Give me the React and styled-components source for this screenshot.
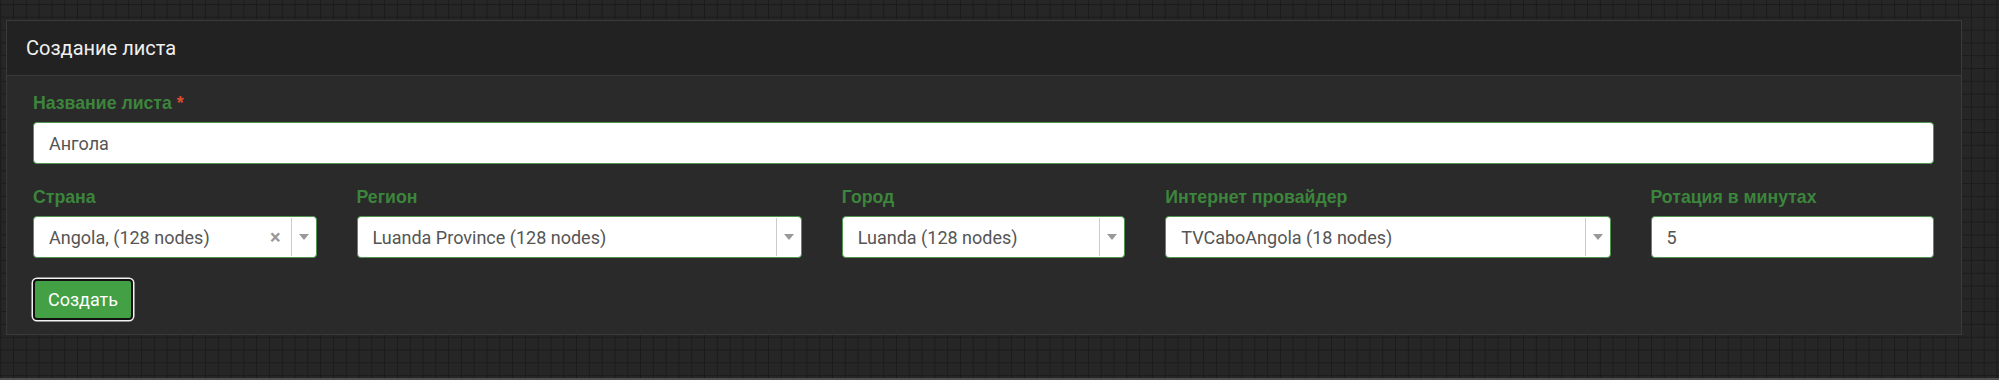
import styled, { createGlobalStyle } from 'styled-components';

const Global = createGlobalStyle`
  html, body {
    margin: 0;
    padding: 0;
    background: #262626;
  }
  body {
    font-family: Roboto, "Liberation Sans", sans-serif;
  }
`;

const Page = styled.div`
  box-sizing: border-box;
  min-height: 380px;
  padding: 20px 37px 0 6px;
  background-color: #262626;
  background-image:
    linear-gradient(to right, #1b1b1b 1px, transparent 1px),
    linear-gradient(to bottom, #1b1b1b 1px, transparent 1px);
  background-size: 12.8px 12.8px;
  background-position: 0.2px 4px;
  border-bottom: 2px solid #505050;
`;

const Panel = styled.section`
  background: #2a2a2a;
  border: 1px solid #3a3a3a;
`;

const PanelHeader = styled.header`
  height: 54px;
  display: flex;
  align-items: center;
  padding: 0 19px;
  background: #222;
  border-bottom: 1px solid #3a3a3a;
  color: #f0f0f0;
  font-size: 20px;
`;

const PanelBody = styled.div`
  padding: 16px 27px 14px 26px;
`;

const Field = styled.div`
  display: flex;
  flex-direction: column;
  min-width: 0;
`;

const Col = styled(Field)`
  padding: 0 20px;
`;

const Label = styled.label`
  font-family: "Liberation Sans", Arial, sans-serif;
  font-weight: bold;
  font-size: 17.7px;
  line-height: 22px;
  color: #3c853c;
  margin-bottom: 8px;
`;

const Required = styled.span`
  color: #e04b2d;
  margin-left: 5px;
`;

const Input = styled.div`
  box-sizing: border-box;
  height: 42px;
  display: flex;
  align-items: center;
  padding: 0 15px;
  background: #fff;
  border: 1px solid #4f954f;
  border-radius: 4px;
  color: #555;
  font-size: 18px;
`;

const Row = styled.div`
  display: grid;
  grid-template-columns: minmax(0, 2fr) minmax(0, 3fr) minmax(0, 2fr) minmax(0, 3fr) minmax(0, 2fr);
  margin: 22px -20px 0;
`;

const SelectBox = styled.div`
  box-sizing: border-box;
  height: 42px;
  display: flex;
  align-items: stretch;
  background: #fff;
  border: 1px solid #4f954f;
  border-radius: 4px;
  color: #555;
  font-size: 18px;
`;

const SelectValue = styled.div`
  flex: 1;
  display: flex;
  align-items: center;
  padding-left: 15px;
  white-space: nowrap;
  overflow: hidden;
`;

const Clear = styled.span`
  display: flex;
  align-items: center;
  padding-right: 10px;
  color: #999;
  font-size: 20px;
  font-weight: bold;
`;

const ArrowZone = styled.div`
  width: 24px;
  display: flex;
  align-items: center;
  justify-content: center;
  border-left: 1px solid #ccc;
  margin: 1px 0;
`;

const Arrow = styled.span`
  width: 0;
  height: 0;
  border-left: 5px solid transparent;
  border-right: 5px solid transparent;
  border-top: 6px solid #999;
`;

const Actions = styled.div`
  margin-top: 21px;
`;

const Button = styled.button`
  box-sizing: border-box;
  width: 100px;
  height: 41px;
  padding: 0;
  background: #44a044;
  color: #fff;
  font-family: Roboto, "Liberation Sans", sans-serif;
  font-size: 18px;
  border: 2px solid #111;
  border-radius: 4px;
  box-shadow: 0 0 0 1.5px #f2f2f2;
  cursor: pointer;
`;

const Select = ({ value, clearable }) => (
  <SelectBox>
    <SelectValue>{value}</SelectValue>
    {clearable && <Clear>×</Clear>}
    <ArrowZone>
      <Arrow />
    </ArrowZone>
  </SelectBox>
);

const fields = [
  { label: 'Страна', value: 'Angola, (128 nodes)', clearable: true },
  { label: 'Регион', value: 'Luanda Province (128 nodes)' },
  { label: 'Город', value: 'Luanda (128 nodes)' },
  { label: 'Интернет провайдер', value: 'TVCaboAngola (18 nodes)' },
];

export default function App() {
  return (
    <>
      <Global />
      <Page>
        <Panel>
          <PanelHeader>Создание листа</PanelHeader>
          <PanelBody>
            <Field>
              <Label>
                Название листа<Required>*</Required>
              </Label>
              <Input>Ангола</Input>
            </Field>
            <Row>
              {fields.map((f) => (
                <Col key={f.label}>
                  <Label>{f.label}</Label>
                  <Select value={f.value} clearable={f.clearable} />
                </Col>
              ))}
              <Col>
                <Label>Ротация в минутах</Label>
                <Input>5</Input>
              </Col>
            </Row>
            <Actions>
              <Button>Создать</Button>
            </Actions>
          </PanelBody>
        </Panel>
      </Page>
    </>
  );
}
